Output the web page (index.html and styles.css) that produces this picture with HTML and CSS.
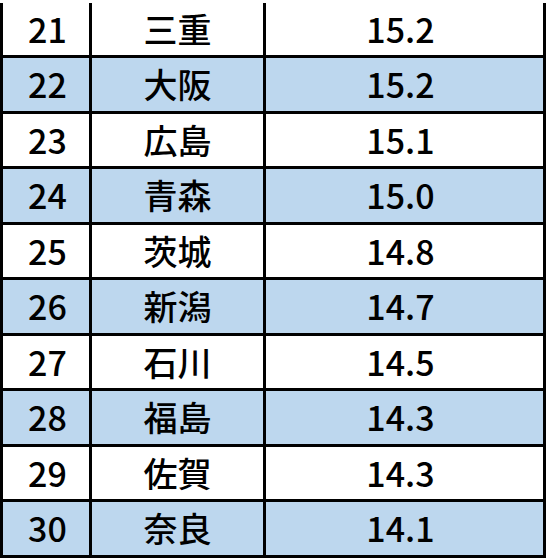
FILE: index.html
```html
<!DOCTYPE html>
<html lang="ja">
<head>
<meta charset="utf-8">
<link rel="stylesheet" href="styles.css">
</head>
<body>
<div class="table">
  <div class="row"><div class="cell rank">21</div><div class="cell pref">三重</div><div class="cell val">15.2</div></div>
  <div class="row alt"><div class="cell rank">22</div><div class="cell pref">大阪</div><div class="cell val">15.2</div></div>
  <div class="row"><div class="cell rank">23</div><div class="cell pref">広島</div><div class="cell val">15.1</div></div>
  <div class="row alt"><div class="cell rank">24</div><div class="cell pref">青森</div><div class="cell val">15.0</div></div>
  <div class="row"><div class="cell rank">25</div><div class="cell pref">茨城</div><div class="cell val">14.8</div></div>
  <div class="row alt"><div class="cell rank">26</div><div class="cell pref">新潟</div><div class="cell val">14.7</div></div>
  <div class="row"><div class="cell rank">27</div><div class="cell pref">石川</div><div class="cell val">14.5</div></div>
  <div class="row alt"><div class="cell rank">28</div><div class="cell pref">福島</div><div class="cell val">14.3</div></div>
  <div class="row"><div class="cell rank">29</div><div class="cell pref">佐賀</div><div class="cell val">14.3</div></div>
  <div class="row alt"><div class="cell rank">30</div><div class="cell pref">奈良</div><div class="cell val">14.1</div></div>
</div>
</body>
</html>
```
FILE: styles.css
```css
html, body {
  margin: 0;
  padding: 0;
  background: #ffffff;
}
body {
  font-family: "Noto Sans CJK JP", "Noto Sans", sans-serif;
  color: #000;
}
.table {
  width: 546px;
  padding-top: 2.5px;
  display: flex;
  flex-direction: column;
}
.row {
  display: grid;
  grid-template-columns: 92px 174px 280px;
  height: 55.5px;
  background: #ffffff;
}
.row.alt {
  background: #bdd7ee;
}
.cell {
  box-sizing: border-box;
  border-right: 3px solid #000;
  border-bottom: 3px solid #000;
  display: flex;
  align-items: center;
  justify-content: center;
  font-size: 34px;
  font-weight: 500;
  line-height: 1;
}
.rank {
  border-left: 3px solid #000;
  padding-left: 3px;
}
.val {
  padding-right: 8px;
}
```
